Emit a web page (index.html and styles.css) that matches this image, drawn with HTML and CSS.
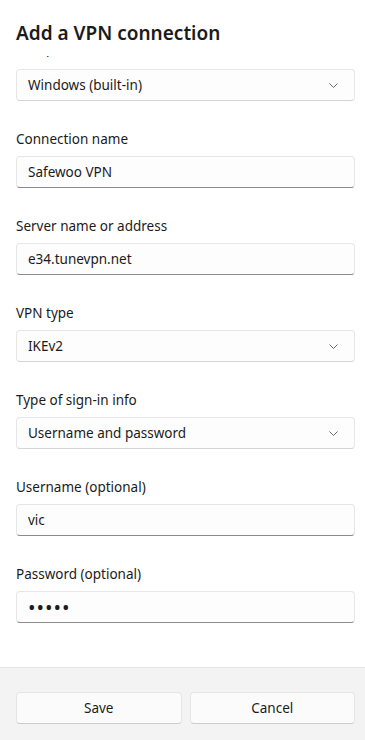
FILE: index.html
```html
<!DOCTYPE html>
<html>
<head>
  <meta name="viewport" content="width=device-width, initial-scale=1.0">
  <link rel="stylesheet" href="styles.css">
</head>
<body>
  <div class="dialog">
    <div class="header">
      <h1>Add a VPN connection</h1>
    </div>

    <div class="content">
      <div class="scroller">
        <div class="field first">
          <label>VPN provider</label>
          <div class="combo">
            <span>Windows (built-in)</span>
            <svg class="chev" width="9" height="5" viewBox="0 0 9 5"><path d="M0.5 0.5l4 4 4-4" fill="none" stroke="#6b6b6b" stroke-width="1"/></svg>
          </div>
        </div>

        <div class="field">
          <label for="connName">Connection name</label>
          <input type="text" id="connName" value="Safewoo VPN">
        </div>

        <div class="field">
          <label for="server">Server name or address</label>
          <input type="text" id="server" value="e34.tunevpn.net">
        </div>

        <div class="field">
          <label>VPN type</label>
          <div class="combo">
            <span>IKEv2</span>
            <svg class="chev" width="9" height="5" viewBox="0 0 9 5"><path d="M0.5 0.5l4 4 4-4" fill="none" stroke="#6b6b6b" stroke-width="1"/></svg>
          </div>
        </div>

        <div class="field">
          <label>Type of sign-in info</label>
          <div class="combo">
            <span>Username and password</span>
            <svg class="chev" width="9" height="5" viewBox="0 0 9 5"><path d="M0.5 0.5l4 4 4-4" fill="none" stroke="#6b6b6b" stroke-width="1"/></svg>
          </div>
        </div>

        <div class="field">
          <label for="username">Username (optional)</label>
          <input type="text" id="username" value="vic">
        </div>

        <div class="field">
          <label for="password">Password (optional)</label>
          <input type="password" id="password" value="abcde">
        </div>
      </div>
    </div>

    <div class="footer">
      <button class="btn">Save</button>
      <button class="btn">Cancel</button>
    </div>
  </div>
</body>
</html>
```

FILE: styles.css
```css
* {
  box-sizing: border-box;
  margin: 0;
  padding: 0;
}

body {
  background-color: #fff;
  font-family: "Noto Sans", "Open Sans", Arial, sans-serif;
  font-size: 13.5px;
  color: #1b1b1b;
}

.dialog {
  width: 365px;
  height: 740px;
  display: flex;
  flex-direction: column;
}

.header {
  height: 56px;
  padding: 19px 16px 0;
  background-color: #fff;
}

h1 {
  font-size: 19px;
  font-weight: 600;
  line-height: 28px;
  color: #1b1b1b;
}

/* scrolled content, first label mostly hidden under the header */
.content {
  flex: 1;
  overflow: hidden;
}

.scroller {
  padding: 0 10px 0 16px;
}

.field {
  margin-bottom: 28px;
}

.field.first {
  margin-top: -18px;
}

.field.first label {
  margin-bottom: 11px;
}

label {
  display: block;
  line-height: 20px;
  margin-bottom: 7px;
  color: #1b1b1b;
}

input,
.combo {
  width: 100%;
  height: 32px;
  padding: 0 11px;
  font-family: inherit;
  font-size: 13.5px;
  color: #1b1b1b;
  background-color: #fdfdfd;
  border: 1px solid #e6e6e6;
  border-radius: 4px;
}

input {
  border-bottom-color: #8b8b8b;
  outline: none;
}

input[type="password"] {
  font-size: 20px;
  letter-spacing: 1px;
}

.combo {
  display: flex;
  align-items: center;
  justify-content: space-between;
  border-bottom-color: #d4d4d4;
}

.chev {
  margin-right: 5px;
}

.footer {
  height: 73px;
  padding: 24px 10px 0 16px;
  background-color: #f3f3f3;
  border-top: 1px solid #e5e5e5;
  display: flex;
  gap: 8px;
}

.btn {
  flex: 1;
  height: 32px;
  font-family: inherit;
  font-size: 13.5px;
  color: #1b1b1b;
  background-color: #fbfbfb;
  border: 1px solid #e5e5e5;
  border-bottom-color: #cccccc;
  border-radius: 4px;
}
```
